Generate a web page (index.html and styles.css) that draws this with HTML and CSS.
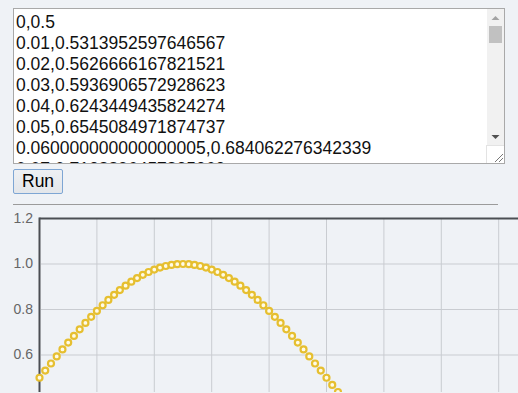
FILE: index.html
```html
<!DOCTYPE html>
<html lang="en">
<head>
  <meta charset="UTF-8">
  <meta name="viewport" content="width=device-width, initial-scale=1.0">
  <title>Plot</title>
  <link rel="stylesheet" href="styles.css">
</head>
<body>
  <div class="editor">
    <textarea id="datos" class="data" spellcheck="false"></textarea>
    <div class="vbar">
      <div class="vbar-btn">
        <svg width="17" height="17" viewBox="0 0 17 17"><path d="M4.5 11h8l-4-4z" fill="#a3a3a3"/></svg>
      </div>
      <div class="vbar-track"><div class="vbar-thumb"></div></div>
      <div class="vbar-btn">
        <svg width="17" height="17" viewBox="0 0 17 17"><path d="M4.5 7h8l-4 4z" fill="#505050"/></svg>
      </div>
      <div class="grip">
        <svg width="17" height="17" viewBox="0 0 17 17"><path d="M16 8L8 16M16 12L12 16" stroke="#777" stroke-width="1"/></svg>
      </div>
    </div>
  </div>
  <button id="btnRun" class="run">Run</button>
  <hr class="sep">
  <svg id="chart" class="chart" width="505" height="184" viewBox="0 0 505 184">
    <g class="grid">
      <line x1="28" y1="56" x2="505" y2="56"/>
      <line x1="28" y1="101.5" x2="505" y2="101.5"/>
      <line x1="28" y1="147" x2="505" y2="147"/>
      <line x1="83.9" y1="11" x2="83.9" y2="184"/>
      <line x1="141.3" y1="11" x2="141.3" y2="184"/>
      <line x1="198.7" y1="11" x2="198.7" y2="184"/>
      <line x1="256.1" y1="11" x2="256.1" y2="184"/>
      <line x1="313.5" y1="11" x2="313.5" y2="184"/>
      <line x1="370.9" y1="11" x2="370.9" y2="184"/>
      <line x1="428.3" y1="11" x2="428.3" y2="184"/>
      <line x1="485.7" y1="11" x2="485.7" y2="184"/>
    </g>
    <g class="ticks">
      <text x="20" y="11">1.2</text>
      <text x="20" y="56.5">1.0</text>
      <text x="20" y="102">0.8</text>
      <text x="20" y="147.5">0.6</text>
    </g>
    <g class="axis">
      <line x1="26.5" y1="10.5" x2="505" y2="10.5"/>
      <line x1="26.5" y1="9.5" x2="26.5" y2="184"/>
    </g>
    <g id="puntos" class="points"></g>
  </svg>
  <script>
    // Datos: x de 0 a 1 sumando 0.01
    const area = document.getElementById('datos');
    const puntos = document.getElementById('puntos');
    const lineas = [];
    let x = 0;
    for (let i = 0; i <= 100; i++) {
      const y = 0.5 + 0.5 * Math.sin(2 * Math.PI * x);
      lineas.push(x + ',' + y);
      const c = document.createElementNS('http://www.w3.org/2000/svg', 'circle');
      c.setAttribute('cx', (26.5 + 574 * x).toFixed(2));
      c.setAttribute('cy', (10.5 + (1.2 - y) * 227.5).toFixed(2));
      c.setAttribute('r', '3');
      puntos.appendChild(c);
      x += 0.01;
    }
    area.value = lineas.join('\n');
  </script>
</body>
</html>
```

FILE: styles.css
```css
html { overflow: hidden; background: #eff2f6; }
body {
  margin: 0;
  padding: 8px 0 0 13px;
  font-family: "Liberation Sans", Arial, sans-serif;
}

.editor {
  display: flex;
  box-sizing: border-box;
  width: 492px;
  height: 156px;
  border: 1px solid #a9a9a9;
  background: #fff;
}
.data {
  flex: 1;
  min-width: 0;
  margin: 0;
  padding: 3px 2px;
  border: 0;
  background: #fff;
  color: #111;
  font: 17.5px "Liberation Sans", Arial, sans-serif;
  overflow: hidden;
  resize: none;
  outline: none;
}

/* barra de desplazamiento dibujada a mano */
.vbar {
  display: flex;
  flex-direction: column;
  width: 17px;
  background: #f1f1f1;
}
.vbar-btn { height: 17px; }
.vbar-btn svg, .grip svg { display: block; }
.vbar-track { flex: 1; padding: 0 2px; }
.vbar-thumb { height: 17px; background: #c1c1c1; }
.grip {
  height: 17px;
  background: #fff;
  border-top: 1px solid #e3e3e3;
  border-left: 1px solid #e3e3e3;
  margin-left: -1px;
}

.run {
  display: block;
  box-sizing: border-box;
  height: 25px;
  margin: 5px 0 0;
  padding: 0 8px;
  border: 1px solid #7ea6d4;
  border-radius: 2px;
  background: linear-gradient(#eef0f3, #e3e6ea);
  color: #000;
  font: 17.5px "Liberation Sans", Arial, sans-serif;
  cursor: pointer;
}

.sep {
  width: 485px;
  margin: 10px 0 0;
  border: 0;
  border-top: 1px solid #9b9b9b;
}

.chart { display: block; margin-top: 3px; }
.grid line { stroke: #c9ccd1; stroke-width: 1; }
.axis line { stroke: #4b4e53; stroke-width: 2; }
.ticks text {
  fill: #666;
  font: 14px "Liberation Sans", Arial, sans-serif;
  text-anchor: end;
  dominant-baseline: middle;
}
.points circle { fill: #fffbe6; stroke: #e6bf30; stroke-width: 2.2; }
```
